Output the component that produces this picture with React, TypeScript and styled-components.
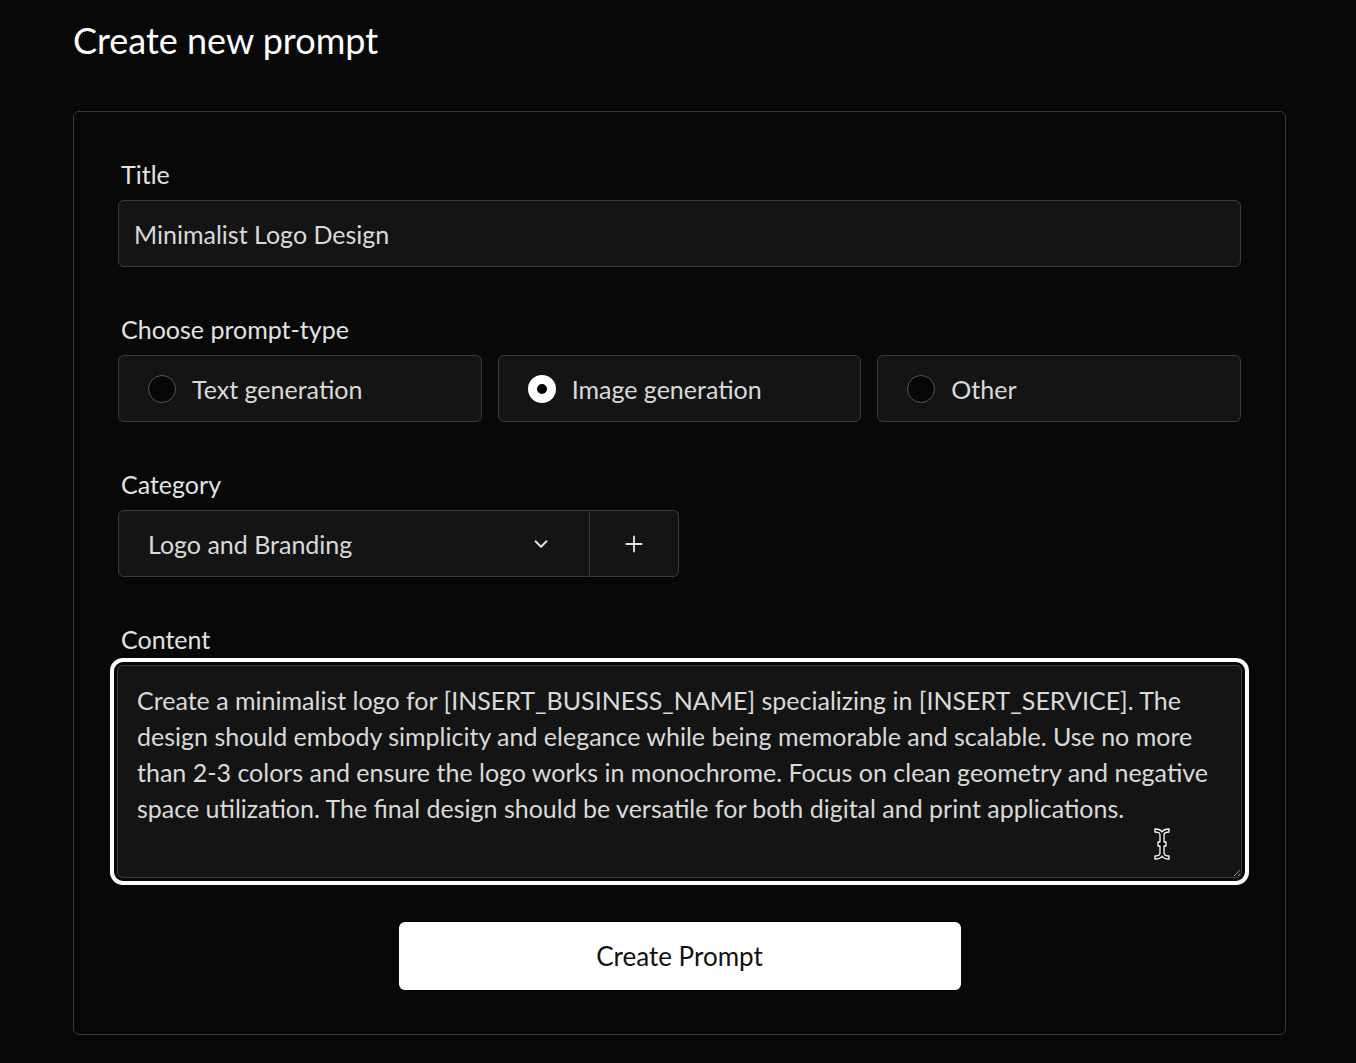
import { useState } from 'react';
import styled, { createGlobalStyle, css } from 'styled-components';
import { ChevronDown, Plus } from 'lucide-react';

const GlobalStyle = createGlobalStyle`
    html, body {
        margin: 0;
        background: #080808;
        font-family: Lato, 'Noto Sans', sans-serif;
        color: #e2e2e2;
    }
    * { box-sizing: border-box; }
`;

type PromptType = 'text' | 'image' | 'other';

const promptTypes: { id: PromptType; label: string }[] = [
    { id: 'text', label: 'Text generation' },
    { id: 'image', label: 'Image generation' },
    { id: 'other', label: 'Other' },
];

const initialContent =
    'Create a minimalist logo for [INSERT_BUSINESS_NAME] specializing in [INSERT_SERVICE]. The design should embody simplicity and elegance while being memorable and scalable. Use no more than 2-3 colors and ensure the logo works in monochrome. Focus on clean geometry and negative space utilization. The final design should be versatile for both digital and print applications.';

export default function App() {
    const [title, setTitle] = useState('Minimalist Logo Design');
    const [type, setType] = useState<PromptType>('image');
    const [content, setContent] = useState(initialContent);

    return (
        <Page>
            <GlobalStyle />
            <Heading>Create new prompt</Heading>
            <Card>
                <Field>
                    <Label>Title</Label>
                    <TextInput value={title} onChange={e => setTitle(e.target.value)} />
                </Field>

                <Field>
                    <Label>Choose prompt-type</Label>
                    <TypeGrid>
                        {promptTypes.map(t => (
                            <TypeOption key={t.id} onClick={() => setType(t.id)}>
                                <RadioDot checked={type === t.id} />
                                {t.label}
                            </TypeOption>
                        ))}
                    </TypeGrid>
                </Field>

                <Field>
                    <Label>Category</Label>
                    <SelectGroup>
                        <SelectBox>
                            Logo and Branding
                            <ChevronDown size={22} strokeWidth={2} />
                        </SelectBox>
                        <AddButton aria-label="Add category">
                            <Plus size={26} strokeWidth={1.7} />
                        </AddButton>
                    </SelectGroup>
                </Field>

                <Field>
                    <Label>Content</Label>
                    <AreaWrap>
                        <ContentArea value={content} onChange={e => setContent(e.target.value)} />
                        <IBeam width="18" height="34" viewBox="0 0 18 34">
                            <path
                                d="M2 2 C6 2 8 3 9 5 C10 3 12 2 16 2 L16 5 C12 5 11 6 11 8 L11 15 L13 15 L13 19 L11 19 L11 26 C11 28 12 29 16 29 L16 32 C12 32 10 31 9 29 C8 31 6 32 2 32 L2 29 C6 29 7 28 7 26 L7 19 L5 19 L5 15 L7 15 L7 8 C7 6 6 5 2 5 Z"
                                fill="#000"
                                stroke="#fff"
                                strokeWidth="1.3"
                                strokeLinejoin="round"
                            />
                        </IBeam>
                    </AreaWrap>
                </Field>

                <SubmitButton>Create Prompt</SubmitButton>
            </Card>
        </Page>
    );
}

const Page = styled.div`
    padding: 19px 70px 28px 73px;
`;

const Heading = styled.h1`
    margin: 0 0 49px;
    font-size: 36px;
    line-height: 1.2;
    font-weight: 400;
    color: #ffffff;
`;

const Card = styled.div`
    width: 1213px;
    border: 1px solid #3a3a3a;
    border-radius: 6px;
    background: #080808;
    padding: 44px;
    display: flex;
    flex-direction: column;
    gap: 44px;
`;

const Field = styled.div`
    display: flex;
    flex-direction: column;
    gap: 8px;
`;

const Label = styled.label`
    padding-left: 3px;
    font-size: 25px;
    line-height: 36px;
    color: #e2e2e2;
`;

const boxBase = css`
    height: 67px;
    background: #141414;
    border: 1px solid #3c3c3c;
    border-radius: 6px;
    font-family: Lato, sans-serif;
    font-size: 25px;
    color: #dadada;
`;

const TextInput = styled.input`
    ${boxBase};
    width: 100%;
    padding: 0 15px;
    outline: none;
`;

const TypeGrid = styled.div`
    display: grid;
    grid-template-columns: repeat(3, 1fr);
    gap: 16px;
`;

const TypeOption = styled.div`
    ${boxBase};
    display: flex;
    align-items: center;
    gap: 16px;
    padding-left: 29px;
    cursor: pointer;
`;

const RadioDot = styled.span<{ checked: boolean }>`
    width: 28px;
    height: 28px;
    border-radius: 50%;
    flex-shrink: 0;
    ${({ checked }) => checked
        ? css`
            background: #000;
            border: 9px solid #ffffff;
        `
        : css`
            background: #060606;
            border: 1.5px solid #555555;
        `}
`;

const SelectGroup = styled.div`
    display: flex;
    width: 561px;
`;

const SelectBox = styled.div`
    ${boxBase};
    flex: 1;
    display: flex;
    align-items: center;
    justify-content: space-between;
    padding: 0 37px 0 29px;
    border-radius: 6px 0 0 6px;

    svg { color: #e4e4e4; }
`;

const AddButton = styled.button`
    ${boxBase};
    width: 89px;
    border-left: none;
    border-radius: 0 6px 6px 0;
    display: flex;
    align-items: center;
    justify-content: center;
    cursor: pointer;

    svg { color: #e4e4e4; }
`;

const AreaWrap = styled.div`
    position: relative;
    margin: 0 -1px;
`;

const ContentArea = styled.textarea`
    display: block;
    width: 100%;
    height: 213px;
    padding: 16px 19px;
    background: #141414;
    border: 1px solid #3c3c3c;
    border-radius: 6px;
    font-family: Lato, sans-serif;
    font-size: 25px;
    line-height: 36px;
    color: #dadada;
    color-scheme: dark;
    resize: vertical;
    outline: none;
    box-shadow: 0 0 0 3px #080808, 0 0 0 7px #ffffff;
`;

const IBeam = styled.svg`
    position: absolute;
    right: 71px;
    bottom: 17px;
    pointer-events: none;
`;

const SubmitButton = styled.button`
    align-self: center;
    width: 562px;
    height: 68px;
    background: #ffffff;
    border: none;
    border-radius: 6px;
    font-family: Lato, sans-serif;
    font-size: 26px;
    color: #111111;
    cursor: pointer;
`;
